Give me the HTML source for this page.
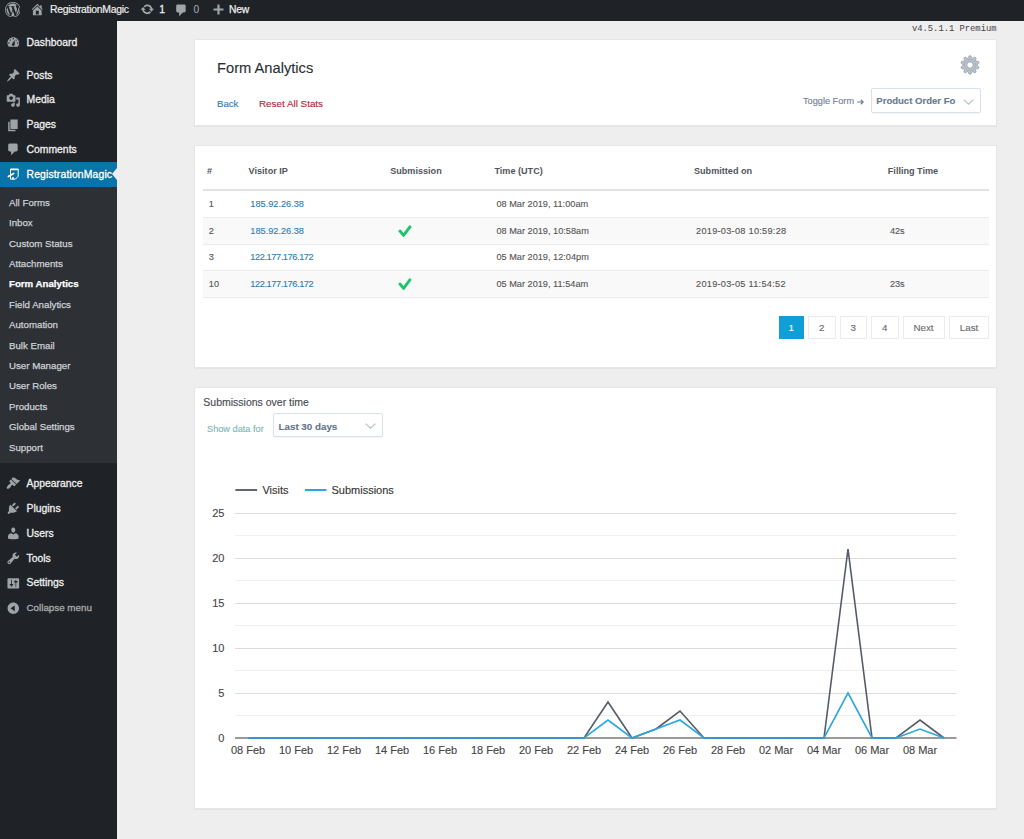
<!DOCTYPE html>
<html><head><meta charset="utf-8">
<style>
*{margin:0;padding:0;box-sizing:border-box}
html,body{width:1024px;height:839px;overflow:hidden;background:#eeeeee;font-family:"Liberation Sans",sans-serif;position:relative}
.a,.yl,.xl,.pg{-webkit-text-stroke:0.12px currentColor}
.a{position:absolute;white-space:nowrap}
#bar{position:absolute;left:0;top:0;width:1024px;height:21px;background:#1f2327}
#side{position:absolute;left:0;top:21px;width:117px;height:818px;background:#1f2327}
.sub{position:absolute;left:0;top:187px;width:117px;height:276px;background:#2d3136}
.hl{position:absolute;left:0;top:162px;width:117px;height:25px;background:#0a73aa}
.mi{position:absolute;left:26.5px;color:#eee;font-size:10.4px;line-height:12px;-webkit-text-stroke:0.3px currentColor}
.si{position:absolute;left:9px;color:#cdd0d4;font-size:9.7px;line-height:12px;-webkit-text-stroke:0.25px currentColor}
.ic{position:absolute;left:5px;width:18px;height:18px}
.card{position:absolute;background:#fff;border:1px solid #e6e6e6;box-shadow:0 1px 1px rgba(0,0,0,.04)}
.th{position:absolute;font-weight:bold;font-size:9.1px;line-height:11px;color:#50555b;margin-top:0.2px}
.td{position:absolute;font-size:9.2px;line-height:11px;color:#555;margin-top:0.8px;-webkit-text-stroke:0.12px currentColor}
.lnk{color:#2a7cb8}
.pg{position:absolute;top:316px;height:23px;border:1px solid #ebebeb;background:#fff;color:#6a6a6a;font-size:9.8px;line-height:21px;text-align:center}
.yl{position:absolute;font-size:11px;line-height:12px;color:#444;text-align:right;width:30px;left:194.4px}
.xl{position:absolute;font-size:11px;line-height:12px;color:#444;text-align:center;width:50px;top:744px}
</style></head><body>
<div id="bar"></div>
<div id="side"></div>
<div class="sub"></div>
<div class="hl"></div>

<!-- admin bar -->
<svg class="a" style="left:4.6px;top:1.8px" width="15.6" height="15.6" viewBox="0 0 20 20"><path fill="#a0a5aa" fill-rule="evenodd" d="M20 10c0-5.52-4.48-10-10-10S0 4.48 0 10s4.48 10 10 10 10-4.48 10-10zM10 1.01c4.97 0 8.99 4.02 8.99 8.99s-4.02 8.99-8.99 8.99S1.01 14.97 1.01 10 5.03 1.01 10 1.01zM8.01 14.82L4.96 6.61c.49-.03 1.05-.08 1.05-.08.43-.05.38-1.01-.06-.99 0 0-1.29.1-2.13.1-.15 0-.33 0-.52-.01 1.44-2.17 3.9-3.6 6.7-3.6 2.09 0 3.99.79 5.41 2.09-.6-.08-1.45.35-1.45 1.42 0 .66.38 1.22.79 1.88.31.54.5 1.22.5 2.21 0 1.34-1.27 4.48-1.27 4.48l-2.71-7.5c.48-.03.75-.16.75-.16.43-.05.38-1.1-.05-1.08 0 0-1.3.11-2.14.11-.78 0-2.11-.11-2.11-.11-.43-.02-.48 1.06-.05 1.08l.84.08 1.12 3.04zm6.02 2.15L16.64 10s.67-1.69.39-3.81c.63 1.14.94 2.42.94 3.810 0 2.96-1.56 5.58-3.94 6.97zM2.68 6.77L6.5 17.25c-2.67-1.3-4.47-4.08-4.47-7.25 0-1.16.2-2.23.65-3.23zm7.45 4.53l2.29 6.25c-.75.27-1.57.42-2.42.42-.72 0-1.41-.11-2.06-.3z"/></svg>
<svg class="a" style="left:29.8px;top:2px" width="14.6" height="14.6" viewBox="0 0 20 20"><path fill="#a0a5aa" d="M16 8.5l1.53 1.53-1.06 1.06L10 4.62l-6.47 6.47-1.06-1.06L10 2.5l4 4v-2h2v4zm-6-2.46l6 5.99V18H4v-5.97zM12 17v-5H8v5h4z"/></svg>
<div class="a" style="left:50px;top:3.7px;font-size:10.4px;letter-spacing:-0.26px;line-height:12px;color:#eee;-webkit-text-stroke:0.2px #eee">RegistrationMagic</div>
<svg class="a" style="left:140px;top:1.8px" width="14.6" height="14.6" viewBox="0 0 20 20"><path fill="#a0a5aa" d="M10.2 3.28c3.53 0 6.43 2.61 6.92 6h2.08l-3.5 4-3.5-4h2.32c-.45-1.97-2.21-3.45-4.32-3.45-1.45 0-2.73.71-3.54 1.78L4.95 5.66C6.23 4.2 8.11 3.28 10.2 3.28zm-.4 13.44c-3.52 0-6.43-2.61-6.92-6H.8l3.5-4c1.17 1.33 2.33 2.67 3.5 4H5.480c.45 1.97 2.21 3.45 4.32 3.45 1.45 0 2.73-.71 3.54-1.78l1.71 1.95c-1.28 1.46-3.15 2.380-5.25 2.38z"/></svg>
<div class="a" style="left:159.3px;top:3.5px;font-size:10.3px;line-height:12px;color:#eee;-webkit-text-stroke:0.3px #eee">1</div>
<svg class="a" style="left:174px;top:2.5px" width="14.6" height="14.6" viewBox="0 0 20 20"><path fill="#a0a5aa" d="M5 2h9c1.1 0 2 .9 2 2v7c0 1.1-.9 2-2 2h-2l-5 5v-5H5c-1.1 0-2-.9-2-2V4c0-1.1.9-2 2-2z"/></svg>
<div class="a" style="left:193.5px;top:3.8px;font-size:10.2px;line-height:12px;color:#a0a5aa">0</div>
<svg class="a" style="left:212.5px;top:4px" width="11" height="11" viewBox="0 0 11 11"><path d="M4.4 0.5h2.2v3.9h3.9v2.2H6.6v3.9H4.4V6.6H0.5V4.4h3.9z" fill="#a0a5aa"/></svg>
<div class="a" style="left:229px;top:3.8px;font-size:10.3px;letter-spacing:-0.15px;line-height:12px;color:#eee;-webkit-text-stroke:0.25px #eee">New</div>

<!-- sidebar -->
<div class="mi" style="top:36.7px">Dashboard</div>
<div class="mi" style="top:69.5px">Posts</div>
<div class="mi" style="top:94.2px">Media</div>
<div class="mi" style="top:118.7px">Pages</div>
<div class="mi" style="top:143.5px">Comments</div>
<div class="mi" style="top:169.2px;color:#fff;letter-spacing:0.15px">RegistrationMagic</div>
<div class="mi" style="top:477.7px">Appearance</div>
<div class="mi" style="top:502.7px">Plugins</div>
<div class="mi" style="top:527.5px">Users</div>
<div class="mi" style="top:552.7px">Tools</div>
<div class="mi" style="top:577.4px">Settings</div>
<div class="mi" style="top:602.4px;color:#aaa;font-size:9.8px">Collapse menu</div>
<!-- sidebar icons -->
<svg class="a" style="left:5.7px;top:35px" width="14.6" height="14.6" viewBox="0 0 20 20"><path fill="#9ea3a8" fill-rule="evenodd" d="M3.76 16h12.48c1.1-1.37 1.76-3.11 1.760-5 0-4.42-3.580-8-8-8s-8 3.58-8 8c0 1.89.66 3.63 1.76 5zM10 4c.55 0 1 .45 1 1s-.45 1-1 1-1-.45-1-1 .45-1 1-1zM6 6c.55 0 1 .45 1 1s-.45 1-1 1-1-.45-1-1 .45-1 1-1zm8 0c.55 0 1 .45 1 1s-.45 1-1 1-1-.45-1-1 .45-1 1-1zm-5.37 5.55L12 7v6c0 1.1-.9 2-2 2s-2-.9-2-2c0-.57.24-1.08.63-1.45zM4 10c.55 0 1 .45 1 1s-.45 1-1 1-1-.45-1-1 .45-1 1-1zm12 0c.55 0 1 .45 1 1s-.45 1-1 1-1-.45-1-1 .45-1 1-1z"/></svg>
<svg class="a" style="left:5.7px;top:67.9px" width="14.6" height="14.6" viewBox="0 0 20 20"><path fill="#9ea3a8" fill-rule="evenodd" d="M10.44 3.02l1.82-1.82 6.36 6.35-1.83 1.82c-1.05-.68-2.48-.57-3.41.36l-.75.75c-.92.93-1.04 2.35-.35 3.41l-1.83 1.82-2.41-2.41-2.8 2.79c-.42.42-3.38 2.71-3.8 2.29s1.86-3.39 2.28-3.81l2.79-2.79L4.1 9.36l1.83-1.82c1.05.69 2.48.57 3.4-.36l.75-.75c.93-.92 1.05-2.350.36-3.41z"/></svg>
<svg class="a" style="left:5.7px;top:92.6px" width="14.6" height="14.6" viewBox="0 0 20 20"><path fill="#9ea3a8" fill-rule="evenodd" d="M13 11V4c0-.55-.45-1-1-1h-1.67L9 1H5L3.67 3H2c-.55 0-1 .45-1 1v7c0 .55.45 1 1 1h10c.55 0 1-.45 1-1zM7 4.5c1.38 0 2.5 1.12 2.5 2.5S8.38 9.5 7 9.5 4.5 8.38 4.5 7 5.62 4.5 7 4.5zM14 6h5v10.5c0 1.38-1.12 2.5-2.5 2.5S14 17.88 14 16.5s1.12-2.5 2.5-2.5c.17 0 .34.02.5.05V9h-3V6zm-4 8.05V13h2v3.5c0 1.38-1.12 2.5-2.5 2.5S7 17.88 7 16.5 8.12 14 9.5 14c.17 0 .34.02.5.05z"/></svg>
<svg class="a" style="left:5.7px;top:117.5px" width="14.6" height="14.6" viewBox="0 0 20 20"><path fill="#9ea3a8" fill-rule="evenodd" d="M6 15V2h10v13H6zm-1 1h8v2H3V5h2v11z"/></svg>
<svg class="a" style="left:5.7px;top:141.8px" width="14.6" height="14.6" viewBox="0 0 20 20"><path fill="#9ea3a8" fill-rule="evenodd" d="M5 2h9c1.1 0 2 .9 2 2v7c0 1.1-.9 2-2 2h-2l-5 5v-5H5c-1.1 0-2-.9-2-2V4c0-1.1.9-2 2-2z"/></svg>
<svg class="a" style="left:5.7px;top:476px" width="14.6" height="14.6" viewBox="0 0 20 20"><path fill="#9ea3a8" fill-rule="evenodd" d="M14.48 11.06L7.41 3.99l1.5-1.5c.5-.56 2.3-.47 3.51.32 1.21.8 1.43 1.28 2.91 2.1 1.18.64 2.45 1.26 4.45.85zm-.71.71L6.7 4.7 4.93 6.47c-.39.39-.39 1.02 0 1.41l1.06 1.06c.39.39.39 1.03 0 1.42-.6.6-1.43 1.11-2.21 1.69-.35.26-.7.53-1.01.84C1.43 14.23.4 16.08 1.4 17.07c.99 1 2.84-.03 4.18-1.36.31-.31.58-.66.85-1.020.57-.78 1.08-1.61 1.69-2.21.39-.39 1.02-.39 1.41 0l1.06 1.06c.39.39 1.02.39 1.41 0z"/></svg>
<svg class="a" style="left:5.7px;top:501px" width="14.6" height="14.6" viewBox="0 0 20 20"><path fill="#9ea3a8" fill-rule="evenodd" d="M13.11 4.36L9.87 7.6 8 5.73l3.24-3.24c.35-.34 1.05-.2 1.56.32.52.51.66 1.21.31 1.55zm-8 1.77l.91-1.12 9.01 9.01-1.19.84c-.71.71-2.63 1.16-3.82 1.16H6.14L4.9 17.26c-.59.59-1.54.59-2.12 0-.59-.58-.59-1.53 0-2.12l1.24-1.24v-3.88c0-1.13.4-3.19 1.09-3.89zm7.26 3.97l3.24-3.24c.34-.35 1.04-.21 1.55.31.52.51.66 1.21.31 1.55l-3.24 3.25z"/></svg>
<svg class="a" style="left:5.7px;top:525.8px" width="14.6" height="14.6" viewBox="0 0 20 20"><path fill="#9ea3a8" fill-rule="evenodd" d="M10 9.25c-2.27 0-2.73-3.44-2.73-3.44C7 4.02 7.82 2 9.97 2c2.16 0 2.98 2.02 2.71 3.81 0 0-.41 3.44-2.68 3.44zm0 2.57L12.72 10c2.39 0 4.52 2.33 4.52 4.53v2.49s-3.65 1.13-7.24 1.13c-3.65 0-7.240-1.13-7.24-1.13v-2.49c0-2.25 1.94-4.48 4.47-4.48z"/></svg>
<svg class="a" style="left:5.7px;top:551px" width="14.6" height="14.6" viewBox="0 0 20 20"><path fill="#9ea3a8" fill-rule="evenodd" d="M16.68 9.77c-1.34 1.34-3.3 1.67-4.95.99l-5.41 6.52c-.99.99-2.59.99-3.58 0s-.99-2.59 0-3.57l6.52-5.42c-.68-1.65-.35-3.61.99-4.95 1.28-1.28 3.12-1.62 4.72-1.06l-2.89 2.89 2.82 2.82 2.86-2.87c.53 1.58.18 3.39-1.08 4.65zM3.81 16.21c.4.39 1.04.39 1.43 0 .4-.4.4-1.04 0-1.43-.39-.4-1.03-.4-1.43 0-.39.39-.39 1.03 0 1.43z"/></svg>
<svg class="a" style="left:5.7px;top:575.8px" width="14.6" height="14.6" viewBox="0 0 20 20"><path fill="#9ea3a8" fill-rule="evenodd" d="M18 16V4c0-.55-.45-1-1-1H3c-.55 0-1 .45-1 1v12c0 .55.45 1 1 1h14c.55 0 1-.45 1-1zM8 11h1c.55 0 1 .45 1 1s-.45 1-1 1H8v1.5c0 .28-.22.5-.5.5s-.5-.22-.5-.5V13H6c-.55 0-1-.45-1-1s.45-1 1-1h1V5.5c0-.28.22-.5.5-.5s.5.22.5.5V11zm5-2h-1c-.55 0-1-.45-1-1s.45-1 1-1h1V5.5c0-.28.22-.5.5-.5s.5.22.5.5V7h1c.55 0 1 .45 1 1s-.45 1-1 1h-1v5.5c0 .28-.22.5-.5.5s-.5-.22-.5-.5V9z"/></svg>
<svg class="a" style="left:5.7px;top:600.7px" width="14.6" height="14.6" viewBox="0 0 20 20"><path fill="#9ea3a8" fill-rule="evenodd" d="M10 2.16c4.33 0 7.84 3.51 7.84 7.84s-3.51 7.84-7.84 7.840S2.16 14.33 2.16 10 5.71 2.16 10 2.16zm2 11.72V6.12L6.18 9.97z"/></svg>
<svg class="a" style="left:4px;top:164px" width="20" height="20" viewBox="4 164 20 20"><path fill="none" stroke="#fff" stroke-width="1" d="M10.5 169V179.2H15.3L18.2 176.3V169Z"/><path fill="none" stroke="#fff" stroke-width="1.3" d="M10.5 169.6H18.2"/><path fill="none" stroke="#fff" stroke-width="1.7" stroke-linecap="round" d="M8.4 176.5L13.6 173.4"/><path fill="#fff" d="M11.9 177.3h2.1v1.9h-2.1z"/></svg>
<!-- arrow -->
<div class="a" style="left:112px;top:168.3px;width:0;height:0;border-top:6px solid transparent;border-bottom:6px solid transparent;border-right:5.5px solid #eeeeee"></div>

<div class="si" style="top:196.8px">All Forms</div>
<div class="si" style="top:217.2px">Inbox</div>
<div class="si" style="top:237.6px">Custom Status</div>
<div class="si" style="top:258.0px">Attachments</div>
<div class="si" style="top:278.4px;color:#fff;font-weight:bold">Form Analytics</div>
<div class="si" style="top:298.8px">Field Analytics</div>
<div class="si" style="top:319.2px">Automation</div>
<div class="si" style="top:339.6px">Bulk Email</div>
<div class="si" style="top:360.0px">User Manager</div>
<div class="si" style="top:380.4px">User Roles</div>
<div class="si" style="top:400.8px">Products</div>
<div class="si" style="top:421.2px">Global Settings</div>
<div class="si" style="top:441.6px">Support</div>

<!-- version -->
<div class="a" style="left:912px;top:24.4px;font-family:'Liberation Mono',monospace;font-size:8.8px;line-height:10px;color:#444;-webkit-text-stroke:0">v4.5.1.1 Premium</div>

<!-- card 1 -->
<div class="card" style="left:194px;top:39px;width:803px;height:87px"></div>
<div class="a" style="left:217px;top:60px;font-size:14.7px;line-height:16px;color:#2c3136">Form Analytics</div>
<div class="a" style="left:217px;top:98px;font-size:9.6px;line-height:11px;color:#2a7cb8">Back</div>
<div class="a" style="left:259px;top:98px;font-size:9.85px;line-height:11px;color:#ad2638">Reset All Stats</div>

<svg class="a" style="left:960px;top:55px" width="20" height="20" viewBox="0 0 20 20"><path fill="#bcc5cd" stroke="#8f9aa5" stroke-width="0.9" fill-rule="evenodd" d="M10.00 0.70 L10.29 0.74 L10.57 0.87 L10.84 1.08 L11.09 1.38 L11.28 1.90 L11.45 2.42 L11.62 2.74 L11.80 2.98 L11.99 3.15 L12.19 3.25 L12.42 3.28 L12.67 3.26 L12.96 3.17 L13.29 3.02 L13.72 2.69 L14.18 2.39 L14.56 2.29 L14.90 2.28 L15.21 2.34 L15.47 2.48 L15.68 2.68 L15.83 2.95 L15.92 3.28 L15.94 3.67 L15.80 4.20 L15.63 4.72 L15.58 5.08 L15.59 5.38 L15.64 5.63 L15.74 5.83 L15.90 5.99 L16.12 6.11 L16.41 6.21 L16.76 6.28 L17.31 6.28 L17.86 6.30 L18.22 6.44 L18.51 6.63 L18.71 6.86 L18.84 7.13 L18.89 7.42 L18.86 7.72 L18.74 8.05 L18.53 8.37 L18.10 8.72 L17.66 9.03 L17.41 9.30 L17.24 9.54 L17.13 9.78 L17.10 10.00 L17.13 10.22 L17.24 10.46 L17.41 10.70 L17.66 10.97 L18.10 11.28 L18.53 11.63 L18.74 11.95 L18.86 12.28 L18.89 12.58 L18.84 12.87 L18.71 13.14 L18.51 13.37 L18.22 13.56 L17.86 13.70 L17.31 13.72 L16.76 13.72 L16.41 13.79 L16.12 13.89 L15.90 14.01 L15.74 14.17 L15.64 14.37 L15.59 14.62 L15.58 14.92 L15.63 15.28 L15.80 15.80 L15.94 16.33 L15.92 16.72 L15.83 17.05 L15.68 17.32 L15.47 17.52 L15.21 17.66 L14.90 17.72 L14.56 17.71 L14.18 17.61 L13.72 17.31 L13.29 16.98 L12.96 16.83 L12.67 16.74 L12.42 16.72 L12.19 16.75 L11.99 16.85 L11.80 17.02 L11.62 17.26 L11.45 17.58 L11.28 18.10 L11.09 18.62 L10.84 18.92 L10.57 19.13 L10.29 19.26 L10.00 19.30 L9.71 19.26 L9.43 19.13 L9.16 18.92 L8.91 18.62 L8.72 18.10 L8.55 17.58 L8.38 17.26 L8.20 17.02 L8.01 16.85 L7.81 16.75 L7.58 16.72 L7.33 16.74 L7.04 16.83 L6.71 16.98 L6.28 17.31 L5.82 17.61 L5.44 17.71 L5.10 17.72 L4.79 17.66 L4.53 17.52 L4.32 17.32 L4.17 17.05 L4.08 16.72 L4.06 16.33 L4.20 15.80 L4.37 15.28 L4.42 14.92 L4.41 14.62 L4.36 14.37 L4.26 14.17 L4.10 14.01 L3.88 13.89 L3.59 13.79 L3.24 13.72 L2.69 13.72 L2.14 13.70 L1.78 13.56 L1.49 13.37 L1.29 13.14 L1.16 12.87 L1.11 12.58 L1.14 12.28 L1.26 11.95 L1.47 11.63 L1.90 11.28 L2.34 10.97 L2.59 10.70 L2.76 10.46 L2.87 10.22 L2.90 10.00 L2.87 9.78 L2.76 9.54 L2.59 9.30 L2.34 9.03 L1.90 8.72 L1.47 8.37 L1.26 8.05 L1.14 7.72 L1.11 7.42 L1.16 7.13 L1.29 6.86 L1.49 6.63 L1.78 6.44 L2.14 6.30 L2.69 6.28 L3.24 6.28 L3.59 6.21 L3.88 6.11 L4.10 5.99 L4.26 5.83 L4.36 5.63 L4.41 5.38 L4.42 5.08 L4.37 4.72 L4.20 4.20 L4.06 3.67 L4.08 3.28 L4.17 2.95 L4.32 2.68 L4.53 2.48 L4.79 2.34 L5.10 2.28 L5.44 2.29 L5.82 2.39 L6.28 2.69 L6.71 3.02 L7.04 3.17 L7.33 3.26 L7.58 3.28 L7.81 3.25 L8.01 3.15 L8.20 2.98 L8.38 2.74 L8.55 2.42 L8.72 1.90 L8.91 1.38 L9.16 1.08 L9.43 0.87 L9.71 0.74Z M10 6.7 A3.3 3.3 0 1 0 10 13.3 A3.3 3.3 0 1 0 10 6.7Z"/><circle cx="10" cy="10" r="5.6" fill="none" stroke="#97a2ad" stroke-width="0.6"/></svg>
<div class="a" style="left:803px;top:95.3px;font-size:9.2px;line-height:12px;color:#6f7f92">Toggle Form</div>
<svg class="a" style="left:857px;top:99px" width="7" height="6" viewBox="0 0 7 6"><path d="M0.3 3H6.2M3.8 0.7L6.2 3L3.8 5.3" fill="none" stroke="#6f7f92" stroke-width="1.2"/></svg>
<div class="a" style="left:871px;top:88px;width:109.5px;height:25px;border:1px solid #d8e1e9;border-radius:2px;background:#fff;box-shadow:0 1px 1px rgba(0,0,0,.03)"></div>
<div class="a" style="left:876.3px;top:95.3px;font-size:9.55px;line-height:12px;font-weight:bold;color:#687a8f">Product Order Fo</div>
<svg class="a" style="left:963px;top:99px" width="11" height="6" viewBox="0 0 11 6"><path d="M0.6 0.6L5.5 5.2L10.4 0.6" fill="none" stroke="#b9c3cc" stroke-width="1.3"/></svg>

<!-- card 2 -->
<div class="card" style="left:194px;top:145px;width:803px;height:223px"></div>

<div class="a" style="left:203px;top:189px;width:786px;height:2px;background:#e3e3e3"></div>
<div class="a" style="left:203px;top:217px;width:786px;height:27px;background:#f9f9f9"></div>
<div class="a" style="left:203px;top:270px;width:786px;height:27px;background:#f9f9f9"></div>
<div class="a" style="left:203px;top:216.5px;width:786px;height:1px;background:#ececec"></div>
<div class="a" style="left:203px;top:243.5px;width:786px;height:1px;background:#ececec"></div>
<div class="a" style="left:203px;top:270px;width:786px;height:1px;background:#ececec"></div>
<div class="a" style="left:203px;top:297px;width:786px;height:1px;background:#ececec"></div>
<div class="th" style="left:207px;top:166px">#</div>
<div class="th" style="left:248.6px;top:166px">Visitor IP</div>
<div class="th" style="left:390.2px;top:166px">Submission</div>
<div class="th" style="left:494.4px;top:166px">Time (UTC)</div>
<div class="th" style="left:694px;top:166px">Submitted on</div>
<div class="th" style="left:887.8px;top:166px">Filling Time</div>
<div class="td" style="left:208.8px;top:198.2px">1</div>
<div class="td lnk" style="left:250.3px;top:198.2px">185.92.26.38</div>
<div class="td" style="left:496.4px;top:198.2px">08 Mar 2019, 11:00am</div>
<div class="td" style="left:208.8px;top:224.8px">2</div>
<div class="td lnk" style="left:250.3px;top:224.8px">185.92.26.38</div>
<svg class="a" style="left:397.5px;top:222.8px" width="16" height="16" viewBox="0 0 16 16"><path d="M2.0 8.0L5.6 12.4L11.9 3.9" fill="none" stroke="#1ec46c" stroke-width="2.9" stroke-linecap="round" stroke-linejoin="round"/></svg>
<div class="td" style="left:496.4px;top:224.8px">08 Mar 2019, 10:58am</div>
<div class="td" style="left:696px;top:224.8px;letter-spacing:0.27px">2019-03-08 10:59:28</div>
<div class="td" style="left:889.9px;top:224.8px">42s</div>
<div class="td" style="left:208.8px;top:251.3px">3</div>
<div class="td lnk" style="left:250.3px;top:251.3px;letter-spacing:-0.4px">122.177.176.172</div>
<div class="td" style="left:496.4px;top:251.3px">05 Mar 2019, 12:04pm</div>
<div class="td" style="left:208.8px;top:277.9px">10</div>
<div class="td lnk" style="left:250.3px;top:277.9px;letter-spacing:-0.4px">122.177.176.172</div>
<svg class="a" style="left:397.5px;top:275.9px" width="16" height="16" viewBox="0 0 16 16"><path d="M2.0 8.0L5.6 12.4L11.9 3.9" fill="none" stroke="#1ec46c" stroke-width="2.9" stroke-linecap="round" stroke-linejoin="round"/></svg>
<div class="td" style="left:496.4px;top:277.9px">05 Mar 2019, 11:54am</div>
<div class="td" style="left:696px;top:277.9px;letter-spacing:0.27px">2019-03-05 11:54:52</div>
<div class="td" style="left:889.9px;top:277.9px">23s</div>

<div class="pg" style="left:778.5px;width:25.5px;background:#0f9fd6;border-color:#0f9fd6;color:#fff">1</div>
<div class="pg" style="left:808px;width:27.5px">2</div>
<div class="pg" style="left:839.5px;width:27.5px">3</div>
<div class="pg" style="left:871px;width:27.5px">4</div>
<div class="pg" style="left:902.5px;width:42px">Next</div>
<div class="pg" style="left:949px;width:40px">Last</div>

<!-- card 3 -->
<div class="card" style="left:194px;top:387px;width:803px;height:422px"></div>

<div class="a" style="left:203.3px;top:396.3px;font-size:10.5px;line-height:12px;color:#44494f">Submissions over time</div>
<div class="a" style="left:207px;top:423px;font-size:9.2px;line-height:12px;color:#79b6b3">Show data for</div>
<div class="a" style="left:273.3px;top:413.3px;width:109.5px;height:24.2px;border:1px solid #d8e1e9;border-radius:2px;background:#fff;box-shadow:0 1px 1px rgba(0,0,0,.03)"></div>
<div class="a" style="left:278.5px;top:420.8px;font-size:9.8px;line-height:12px;font-weight:bold;color:#64758a">Last 30 days</div>
<svg class="a" style="left:365px;top:423px" width="11" height="6" viewBox="0 0 11 6"><path d="M0.6 0.6L5.5 5.2L10.4 0.6" fill="none" stroke="#b9c3cc" stroke-width="1.3"/></svg>
<svg class="a" style="left:0;top:0" width="1024" height="839" viewBox="0 0 1024 839">
<line x1="235.4" y1="490" x2="257.1" y2="490" stroke="#62676f" stroke-width="2"/>
<line x1="305" y1="490" x2="326.4" y2="490" stroke="#2aa7df" stroke-width="2"/>
<line x1="235" y1="513.5" x2="956.5" y2="513.5" stroke="#dcdcdc" stroke-width="1"/>
<line x1="235" y1="535.5" x2="956.5" y2="535.5" stroke="#efefef" stroke-width="1"/>
<line x1="235" y1="558.5" x2="956.5" y2="558.5" stroke="#dcdcdc" stroke-width="1"/>
<line x1="235" y1="580.5" x2="956.5" y2="580.5" stroke="#efefef" stroke-width="1"/>
<line x1="235" y1="603.5" x2="956.5" y2="603.5" stroke="#dcdcdc" stroke-width="1"/>
<line x1="235" y1="625.5" x2="956.5" y2="625.5" stroke="#efefef" stroke-width="1"/>
<line x1="235" y1="648.5" x2="956.5" y2="648.5" stroke="#dcdcdc" stroke-width="1"/>
<line x1="235" y1="670.5" x2="956.5" y2="670.5" stroke="#efefef" stroke-width="1"/>
<line x1="235" y1="693.5" x2="956.5" y2="693.5" stroke="#dcdcdc" stroke-width="1"/>
<line x1="235" y1="715.5" x2="956.5" y2="715.5" stroke="#efefef" stroke-width="1"/>
<line x1="235" y1="738" x2="956.5" y2="738" stroke="#9a9a9a" stroke-width="2"/>
<polyline points="248,738 272,738 296,738 320,738 344,738 368,738 392,738 416,738 440,738 464,738 488,738 512,738 536,738 560,738 584,738 608,702 632,738 656,729 680,711 704,738 728,738 752,738 776,738 800,738 824,738 848,549 872,738 896,738 920,720 944,738" fill="none" stroke="#555c68" stroke-width="1.6" stroke-linejoin="miter"/>
<polyline points="248,738 272,738 296,738 320,738 344,738 368,738 392,738 416,738 440,738 464,738 488,738 512,738 536,738 560,738 584,738 608,720 632,738 656,729 680,720 704,738 728,738 752,738 776,738 800,738 824,738 848,693 872,738 896,738 920,729 944,738" fill="none" stroke="#2aa7df" stroke-width="1.6" stroke-linejoin="miter"/>
</svg>
<div class="a" style="left:262.4px;top:484px;font-size:11px;line-height:12px;color:#333">Visits</div>
<div class="a" style="left:331.5px;top:484px;font-size:11px;line-height:12px;color:#333">Submissions</div>
<div class="yl" style="top:507px">25</div>
<div class="yl" style="top:552px">20</div>
<div class="yl" style="top:597px">15</div>
<div class="yl" style="top:642px">10</div>
<div class="yl" style="top:687px">5</div>
<div class="yl" style="top:732px">0</div>
<div class="xl" style="left:223px">08 Feb</div>
<div class="xl" style="left:271px">10 Feb</div>
<div class="xl" style="left:319px">12 Feb</div>
<div class="xl" style="left:367px">14 Feb</div>
<div class="xl" style="left:415px">16 Feb</div>
<div class="xl" style="left:463px">18 Feb</div>
<div class="xl" style="left:511px">20 Feb</div>
<div class="xl" style="left:559px">22 Feb</div>
<div class="xl" style="left:607px">24 Feb</div>
<div class="xl" style="left:655px">26 Feb</div>
<div class="xl" style="left:703px">28 Feb</div>
<div class="xl" style="left:751px">02 Mar</div>
<div class="xl" style="left:799px">04 Mar</div>
<div class="xl" style="left:847px">06 Mar</div>
<div class="xl" style="left:895px">08 Mar</div>

</body></html>
